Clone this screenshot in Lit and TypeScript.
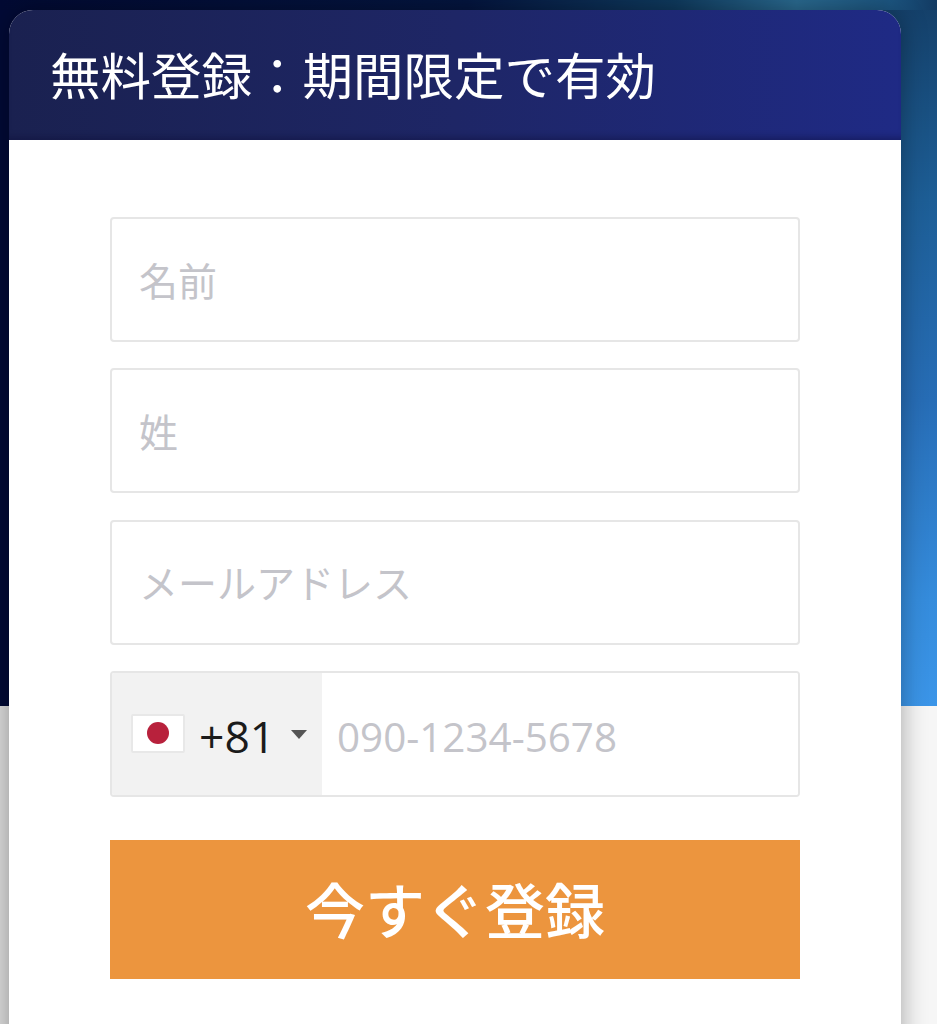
import { LitElement, html, css } from "lit";
import { customElement } from "lit/decorators.js";

@customElement("app-root")
export class AppRoot extends LitElement {
  static styles = css`
    :host {
      display: block;
      height: 1024px;
      overflow: hidden;
      box-sizing: border-box;
      padding: 10px 36px 0 9px;
      font-family: "Noto Sans CJK JP", "Open Sans", sans-serif;
      background:
        linear-gradient(90deg, #020a33 0%, #04153f 50%, #0f3a5e 72%, #2a6a90 85%, #1c5580 95%, #123a62 100%) no-repeat 0 0 / 100% 10px,
        linear-gradient(180deg, #143f68 0, #1d5e96 200px, #276db6 400px, #358cdc 600px, #3b95e8 706px) no-repeat 100% 0 / 80px 706px,
        linear-gradient(#020a36, #020a36) no-repeat 0 0 / 100% 706px,
        linear-gradient(#dcdcdc, #dcdcdc) no-repeat 0 706px / 9px 318px,
        #f6f6f6;
    }
    .card {
      background: #fff;
      border-radius: 24px 24px 0 0;
      box-shadow: 0 0 26px rgba(0, 0, 0, 0.34);
      height: 1100px;
    }
    .head {
      box-sizing: border-box;
      height: 130px;
      border-radius: 24px 24px 0 0;
      padding: 0 0 4px 41px;
      display: flex;
      align-items: center;
      color: #fff;
      font-size: 50.5px;
      font-weight: 400;
      line-height: 1;
      white-space: nowrap;
      background: linear-gradient(90deg, #1a2150 0%, #1e2666 50%, #1f2a85 100%);
      box-shadow: inset 0 -7px 7px -5px rgba(10, 12, 50, 0.45);
    }
    form {
      display: flex;
      flex-direction: column;
      margin: 0;
      padding: 77px 101px 0;
    }
    .field {
      box-sizing: border-box;
      display: block;
      width: 100%;
      height: 125px;
      margin: 0 0 26.4px;
      padding: 0 27px 2px;
      border: 2px solid #e6e6e6;
      border-radius: 4px;
      background: #fff;
      font-family: "Noto Sans CJK JP", "Open Sans", sans-serif;
      font-size: 39px;
      outline: none;
    }
    input::placeholder {
      color: #c4c4ca;
      opacity: 1;
    }
    .phone {
      box-sizing: border-box;
      display: flex;
      height: 126px;
      border: 2px solid #e6e6e6;
      border-radius: 4px;
      overflow: hidden;
    }
    .dial {
      box-sizing: border-box;
      flex: 0 0 210px;
      display: flex;
      align-items: center;
      padding-left: 19px;
      background: #f2f2f2;
      font-family: "Open Sans", sans-serif;
      font-size: 44.4px;
      color: #1b1b1b;
    }
    .flag {
      box-sizing: border-box;
      flex: none;
      width: 54px;
      height: 39px;
      display: flex;
      align-items: center;
      justify-content: center;
      background: #fff;
      border: 2px solid #e8e8e8;
      border-radius: 2px;
      margin: 0 14px 2px 0;
    }
    .sun {
      width: 22px;
      height: 22px;
      border-radius: 50%;
      background: #b8213c;
    }
    .code {
      line-height: 1;
      padding-top: 4px;
    }
    .caret {
      flex: none;
      margin-left: 16px;
      width: 0;
      height: 0;
      border-left: 8px solid transparent;
      border-right: 8px solid transparent;
      border-top: 9px solid #555;
    }
    .tel {
      flex: 1;
      min-width: 0;
      border: none;
      outline: none;
      padding: 5px 0 0 15px;
      font-family: "Open Sans", sans-serif;
      font-size: 40.4px;
      background: #fff;
    }
    button {
      display: block;
      width: 100%;
      height: 139px;
      margin: 43px 0 0;
      border: none;
      background: #ec953e;
      color: #fff;
      font-family: "Noto Sans CJK JP", "Open Sans", sans-serif;
      font-size: 60px;
      font-weight: 500;
      padding: 0 0 5px;
    }
  `;

  render() {
    return html`
      <div class="card">
        <div class="head">無料登録：期間限定で有効</div>
        <form @submit=${(e: Event) => e.preventDefault()}>
          <input class="field" placeholder="名前" />
          <input class="field" placeholder="姓" />
          <input class="field" placeholder="メールアドレス" />
          <div class="phone">
            <div class="dial">
              <span class="flag"><span class="sun"></span></span>
              <span class="code">+81</span>
              <span class="caret"></span>
            </div>
            <input class="tel" placeholder="090-1234-5678" />
          </div>
          <button type="submit">今すぐ登録</button>
        </form>
      </div>
    `;
  }
}
